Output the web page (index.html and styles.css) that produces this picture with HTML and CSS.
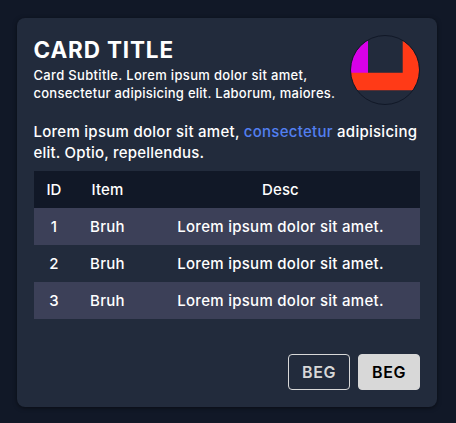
FILE: index.html
```html
<!DOCTYPE html>
<html lang="en">
<head>
<meta charset="utf-8">
<title>Card</title>
<link rel="stylesheet" href="styles.css">
</head>
<body>
<article class="card">
  <header class="head">
    <div class="heading">
      <h1 class="title">CARD TITLE</h1>
      <p class="subtitle">Card Subtitle. Lorem ipsum dolor sit amet,<br><span class="second">consectetur adipisicing elit. Laborum, maiores.</span></p>
    </div>
    <svg class="avatar" viewBox="0 0 70 70" aria-hidden="true">
      <defs><clipPath id="disc"><circle cx="35" cy="35" r="34.3"/></clipPath></defs>
      <g clip-path="url(#disc)">
        <path fill="#d800e8" d="M0 0H18V38H0z"/>
        <path fill="#ff3a17" d="M0 37.7H52.7V0H70V55.3H0z"/>
      </g>
      <circle cx="35" cy="35" r="34.5" fill="none" stroke="#111827"/>
    </svg>
  </header>
  <p class="text">Lorem ipsum dolor sit amet, <a class="link">consectetur</a> adipisicing<br><span class="second">elit. Optio, repellendus.</span></p>
  <table class="table">
    <colgroup><col class="col-id"><col class="col-item"><col></colgroup>
    <thead><tr><th>ID</th><th>Item</th><th>Desc</th></tr></thead>
    <tbody>
      <tr><td>1</td><td>Bruh</td><td>Lorem ipsum dolor sit amet.</td></tr>
      <tr><td>2</td><td>Bruh</td><td>Lorem ipsum dolor sit amet.</td></tr>
      <tr><td>3</td><td>Bruh</td><td>Lorem ipsum dolor sit amet.</td></tr>
    </tbody>
  </table>
  <footer class="actions">
    <button class="btn">BEG</button>
    <button class="btn solid">BEG</button>
  </footer>
</article>
</body>
</html>
```
FILE: styles.css
```css
* { box-sizing: border-box; }
body {
  margin: 0;
  height: 423px;
  padding: 18px 19px 16px 17px;
  background: #111827;
  color: #fff;
  font: 500 15px/21px Inter, sans-serif;
}
h1, p { margin: 0; }
.card {
  display: flex;
  flex-direction: column;
  height: 389px;
  padding: 17px;
  border-radius: 8px;
  background: #222b3c;
  box-shadow: 0 1px 4px rgba(0, 0, 0, .5);
}
.head { display: flex; justify-content: space-between; height: 70px; }
.heading { margin-left: -.5px; white-space: nowrap; }
.title { font-size: 22.5px; line-height: 30px; font-weight: 700; letter-spacing: .85px; }
.subtitle { margin-top: 1px; font-size: 13px; line-height: 18px; letter-spacing: .33px; }
.subtitle .second { letter-spacing: .25px; }
.avatar { flex: none; width: 70px; height: 70px; }
.text { margin: 16px 0 0 -.5px; white-space: nowrap; letter-spacing: .27px; }
.text .second { letter-spacing: .2px; }
.link { color: #527ff0; }
.table {
  width: 386px;
  margin-top: 8px;
  table-layout: fixed;
  border-collapse: collapse;
  text-align: center;
}
.col-id { width: 40px; }
.col-item { width: 67px; }
.table th, .table td { height: 37px; padding: 0; font-weight: 500; }
.table td { letter-spacing: .28px; }
.table th { letter-spacing: .1px; }
.table thead { background: #111827; }
.table tbody tr:nth-child(odd) { background: #3c4058; }
.actions { display: flex; justify-content: flex-end; gap: 8px; margin-top: 35px; }
.btn {
  width: 62px;
  height: 36px;
  padding: 0;
  border: 1px solid #d8d8d8;
  border-radius: 4px;
  background: transparent;
  color: #d8d8d8;
  font: 600 16px/20px Inter, sans-serif;
  letter-spacing: .6px;
}
.solid { background: #d8d8d8; color: #000; }
```
